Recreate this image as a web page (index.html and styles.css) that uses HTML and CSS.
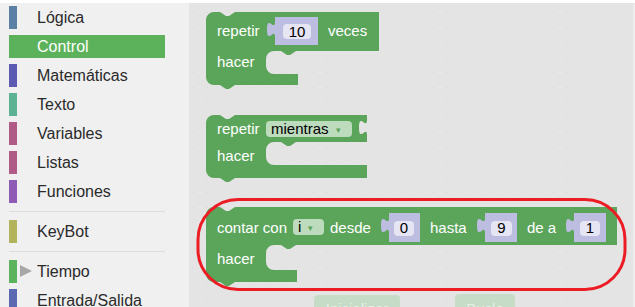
FILE: index.html
```html
<!DOCTYPE html>
<html lang="es">
<head>
<meta charset="utf-8">
<title>Bloques</title>
<link rel="stylesheet" href="styles.css">
</head>
<body>
<div class="app">
  <div class="topstrip"></div>
  <div class="main">
    <nav class="toolbox">
      <div class="cat"><span class="stripe c-logic"></span><span class="label">Lógica</span></div>
      <div class="cat selected"><span class="stripe"></span><span class="label">Control</span></div>
      <div class="cat"><span class="stripe c-math"></span><span class="label">Matemáticas</span></div>
      <div class="cat"><span class="stripe c-text"></span><span class="label">Texto</span></div>
      <div class="cat"><span class="stripe c-var"></span><span class="label">Variables</span></div>
      <div class="cat"><span class="stripe c-list"></span><span class="label">Listas</span></div>
      <div class="cat"><span class="stripe c-func"></span><span class="label">Funciones</span></div>
      <div class="sep"></div>
      <div class="cat"><span class="stripe c-key"></span><span class="label">KeyBot</span></div>
      <div class="sep"></div>
      <div class="cat"><span class="stripe c-time"></span><span class="twisty"><span class="tri"></span></span><span class="label tight">Tiempo</span></div>
      <div class="cat"><span class="stripe c-io"></span><span class="label">Entrada/Salida</span></div>
    </nav>
    <main class="workspace">
      <svg class="canvas" width="446" height="304" viewBox="189 3 446 304" xmlns="http://www.w3.org/2000/svg">
        <defs>
          <pattern id="grid" x="12" y="12" width="15" height="15" patternUnits="userSpaceOnUse">
            <rect x="0" y="0" width="1" height="1" fill="#d6d6d6"/>
          </pattern>
        </defs>
        <rect x="189" y="3" width="446" height="304" fill="url(#grid)"/>
        <rect x="633" y="3" width="6" height="310" rx="3" fill="#eeeeee"/>

        <!-- Block 1: repetir 10 veces -->
        <path class="blk" d="M206,20 A8,8 0 0 1 214,12 H220 l6,4 h3 l6,-4 H379 V51 H296 l-6,4 h-3 l-6,-4 H274 A8,8 0 0 0 266,59 V66 A8,8 0 0 0 274,74 H298 V85 H235 l-6,4 h-3 l-6,-4 H214 A8,8 0 0 1 206,77 Z"/>
        <text class="lbl" x="217" y="36">repetir</text>
        <path class="shadow" d="M275,17 H318 V45 H275 V37 c0,-10 -8,8 -8,-7.5 s8,2.5 8,-7.5 Z"/>
        <rect class="field" x="283" y="24" width="28" height="15" rx="4"/>
        <text class="ftxt" x="297" y="37" text-anchor="middle">10</text>
        <text class="lbl" x="328" y="36">veces</text>
        <text class="lbl" x="217" y="67">hacer</text>

        <!-- Block 2: repetir mientras -->
        <path class="blk" d="M206,123 A8,8 0 0 1 214,115 H220 l6,4 h3 l6,-4 H367 V120 c0,10 -8,-8 -8,7.5 s8,-2.5 8,7.5 V142 H296 l-6,4 h-3 l-6,-4 H274 A8,8 0 0 0 266,150 V157 A8,8 0 0 0 274,165 H367 V178 H235 l-6,4 h-3 l-6,-4 H214 A8,8 0 0 1 206,170 Z"/>
        <text class="lbl" x="217" y="134">repetir</text>
        <rect class="field" x="266" y="121" width="86" height="16" rx="4"/>
        <text class="ftxt" x="271" y="134">mientras</text>
        <text class="arrow" x="336" y="133">▾</text>
        <text class="lbl" x="217" y="161">hacer</text>

        <!-- Block 3: contar con -->
        <path class="blk" d="M206,215 A8,8 0 0 1 214,207 H220 l6,4 h3 l6,-4 H617 V245 H296 l-6,4 h-3 l-6,-4 H274 A8,8 0 0 0 266,253 V262 A8,8 0 0 0 274,270 H297 V282 H235 l-6,4 h-3 l-6,-4 H214 A8,8 0 0 1 206,274 Z"/>
        <text class="lbl" x="217" y="233">contar con</text>
        <rect class="field" x="293" y="219" width="31" height="16" rx="4"/>
        <text class="ftxt" x="298" y="232">i</text>
        <text class="arrow" x="308" y="231">▾</text>
        <text class="lbl" x="330" y="233">desde</text>
        <path class="shadow" d="M389,213 H420 V242 H389 V233 c0,-10 -8,8 -8,-7.5 s8,2.5 8,-7.5 Z"/>
        <rect class="field" x="394" y="221" width="20" height="15" rx="4"/>
        <text class="ftxt" x="404" y="233" text-anchor="middle">0</text>
        <text class="lbl" x="430" y="233">hasta</text>
        <path class="shadow" d="M485,213 H517 V242 H485 V233 c0,-10 -8,8 -8,-7.5 s8,2.5 8,-7.5 Z"/>
        <rect class="field" x="491" y="221" width="21" height="15" rx="4"/>
        <text class="ftxt" x="501.5" y="233" text-anchor="middle">9</text>
        <text class="lbl" x="527" y="233">de a</text>
        <path class="shadow" d="M574,213 H606 V242 H574 V233 c0,-10 -8,8 -8,-7.5 s8,2.5 8,-7.5 Z"/>
        <rect class="field" x="580" y="221" width="20" height="15" rx="4"/>
        <text class="ftxt" x="590" y="233" text-anchor="middle">1</text>
        <text class="lbl" x="217" y="264">hacer</text>

        <!-- highlight -->
        <rect class="ring" x="198" y="199.5" width="427" height="90" rx="40" ry="40"/>

        <!-- faded buttons -->
        <rect class="btn" x="314" y="295" width="86" height="26" rx="4"/>
        <text class="btntxt" x="357" y="313.5" text-anchor="middle">Inicializar</text>
        <rect class="btn" x="455" y="294" width="60" height="26" rx="4"/>
        <text class="btntxt" x="485" y="313.5" text-anchor="middle">Bucle</text>
      </svg>
    </main>
  </div>
</div>
</body>
</html>
```

FILE: styles.css
```css
html, body {
  margin: 0;
  padding: 0;
  overflow: hidden;
  background: #ffffff;
}

.app {
  width: 635px;
  height: 307px;
  display: flex;
  flex-direction: column;
  font-family: "Liberation Sans", Arial, sans-serif;
}

.topstrip {
  height: 3px;
  flex: none;
  background: #ffffff;
}

.main {
  flex: 1;
  display: flex;
  min-height: 0;
}

.toolbox {
  width: 189px;
  flex: none;
  box-sizing: border-box;
  background: #f0f0f0;
  padding: 3px 0 0 9px;
  display: flex;
  flex-direction: column;
  gap: 6px;
}

.cat {
  width: 156px;
  height: 23px;
  flex: none;
  display: flex;
  align-items: center;
}

.stripe {
  width: 8px;
  height: 23px;
  flex: none;
}

.label {
  padding-left: 20px;
  font-size: 16px;
  line-height: 23px;
  color: #2a2a2a;
  white-space: nowrap;
}

.label.tight {
  padding-left: 4px;
}

.twisty {
  width: 16px;
  height: 23px;
  flex: none;
  display: flex;
  align-items: center;
  padding-left: 3px;
  box-sizing: border-box;
}

.tri {
  width: 0;
  height: 0;
  border-left: 12px solid #a8a8a8;
  border-top: 6.5px solid transparent;
  border-bottom: 6.5px solid transparent;
  margin-top: -1px;
}

.cat.selected {
  background: #5bb25b;
}

.cat.selected .label {
  color: #ffffff;
}

.c-logic { background: #5b80a5; }
.c-math  { background: #5b5bb2; }
.c-text  { background: #5bb394; }
.c-var   { background: #b05b86; }
.c-list  { background: #b05b86; }
.c-func  { background: #8e5bb5; }
.c-key   { background: #b3b35b; }
.c-time  { background: #5bb35b; }
.c-io    { background: #5b68b2; }

.sep {
  width: 156px;
  height: 1px;
  flex: none;
  margin: 2px 0;
  background: #dcdcdc;
}

.workspace {
  flex: 1;
  background: #e4e4e4;
  overflow: hidden;
}

.canvas {
  display: block;
}

.blk {
  fill: #5ba55b;
}

.shadow {
  fill: #bdbde1;
}

.field {
  fill: #ffffff;
  fill-opacity: 0.6;
}

.lbl {
  fill: #ffffff;
  font-family: "Liberation Sans", Arial, sans-serif;
  font-size: 15px;
}

.ftxt {
  fill: #000000;
  font-family: "Liberation Sans", Arial, sans-serif;
  font-size: 15px;
}

.arrow {
  fill: #5ba55b;
  font-family: "DejaVu Sans", sans-serif;
  font-size: 9px;
}

.ring {
  fill: none;
  stroke: #ec1c24;
  stroke-width: 3;
}

.btn {
  fill: #c6dcc6;
}

.btntxt {
  fill: #e6efe6;
  font-family: "Liberation Sans", Arial, sans-serif;
  font-size: 15px;
}
```
